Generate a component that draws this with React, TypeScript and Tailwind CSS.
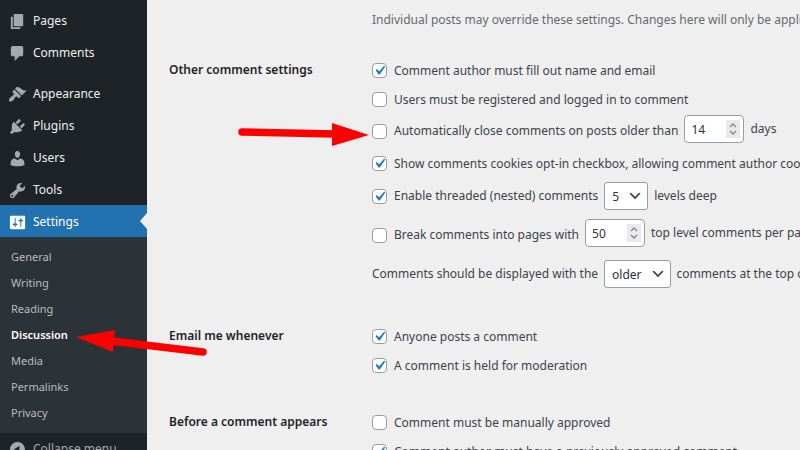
import React from "react";

const menuIcons = {
  pages: "M6 15V2h10v13H6zm-1 1h8v2H3V5h2v11z",
  comments:
    "M5 2h9c1.1 0 2 .9 2 2v7c0 1.1-.9 2-2 2h-2l-5 5v-5H5c-1.1 0-2-.9-2-2V4c0-1.1.9-2 2-2z",
  appearance:
    "M14.48 11.06L7.41 3.99l1.5-1.5c.5-.56 2.3-.47 3.51.32 1.21.8 1.43 1.28 2.91 2.1 1.18.64 2.45 1.26 4.45.85zm-.71.71L6.7 4.7 4.93 6.47c-.39.39-.39 1.02 0 1.41l1.06 1.06c.39.39.39 1.03 0 1.42-.6.6-1.43 1.11-2.21 1.69-.35.26-.7.53-1.01.84C1.43 14.23.4 16.08 1.4 17.07c.99 1 2.84-.03 4.18-1.36.31-.31.58-.66.85-1.02.57-.78 1.08-1.61 1.69-2.21.39-.39 1.02-.39 1.41 0l1.06 1.06c.39.39 1.02.39 1.41 0z",
  plugins:
    "M13.11 4.36L9.87 7.6 8 5.73l3.24-3.24c.35-.34 1.05-.2 1.56.32.52.51.66 1.21.31 1.55zm-8 1.77l.91-1.12 9.01 9.01-1.19.84c-.71.71-2.63 1.16-3.82 1.16H6.14L4.9 17.26c-.59.59-1.54.59-2.12 0-.59-.58-.59-1.53 0-2.12l1.24-1.24v-3.88c0-1.13.4-3.19 1.09-3.89zm7.26 3.97l3.24-3.24c.34-.35 1.04-.21 1.55.31.52.51.66 1.21.31 1.55l-3.24 3.25z",
  users:
    "M10 9.25c-2.27 0-2.73-3.44-2.73-3.44C7 4.02 7.82 2 9.97 2c2.16 0 2.98 2.02 2.71 3.81 0 0-.41 3.44-2.68 3.44zm0 2.57L12.72 10c2.39 0 4.52 2.33 4.52 4.53v2.49s-3.65 1.13-7.24 1.13c-3.65 0-7.24-1.13-7.24-1.13v-2.49c0-2.25 1.94-4.48 4.47-4.48z",
  tools:
    "M16.68 9.77c-1.34 1.34-3.3 1.67-4.95.99l-5.41 6.52c-.99.99-2.59.99-3.58 0s-.99-2.59 0-3.57l6.52-5.42c-.68-1.65-.35-3.61.99-4.95 1.28-1.28 3.12-1.62 4.72-1.06l-2.89 2.89 2.82 2.82 2.86-2.87c.53 1.58.18 3.39-1.08 4.65zM3.81 16.21c.4.39 1.04.39 1.43 0 .4-.4.4-1.04 0-1.43-.39-.4-1.03-.4-1.43 0-.39.39-.39 1.03 0 1.43z",
  settings:
    "M18 16V4c0-.55-.45-1-1-1H3c-.55 0-1 .45-1 1v12c0 .55.45 1 1 1h14c.55 0 1-.45 1-1zM8 11h1c.55 0 1 .45 1 1s-.45 1-1 1H8v1.5c0 .28-.22.5-.5.5s-.5-.22-.5-.5V13H6c-.55 0-1-.45-1-1s.45-1 1-1h1V5.5c0-.28.22-.5.5-.5s.5.22.5.5V11zm5-2h-1c-.55 0-1-.45-1-1s.45-1 1-1h1V5.5c0-.28.22-.5.5-.5s.5.22.5.5V7h1c.55 0 1 .45 1 1s-.45 1-1 1h-1v5.5c0 .28-.22.5-.5.5s-.5-.22-.5-.5V9z",
  collapse:
    "M10 2.16c4.33 0 7.84 3.51 7.84 7.84s-3.51 7.84-7.84 7.84S2.16 14.33 2.16 10 5.71 2.16 10 2.16zm2 11.72V6.12L6.18 9.97z",
};

function MenuIcon({ name }: { name: keyof typeof menuIcons }) {
  return (
    <svg viewBox="0 0 20 20" className="h-[19px] w-[19px] shrink-0" fill="currentColor" aria-hidden="true">
      <path d={menuIcons[name]} />
    </svg>
  );
}

function MenuItem({
  icon,
  label,
  current = false,
}: {
  icon: keyof typeof menuIcons;
  label: string;
  current?: boolean;
}) {
  return (
    <a
      href="#"
      aria-current={current ? "page" : undefined}
      className={
        current
          ? "relative flex h-8 shrink-0 items-center gap-1.5 bg-[#2271b1] pt-0.5 pl-2 text-white"
          : "flex h-8 shrink-0 items-center gap-1.5 pt-0.5 pl-2 text-[#a7aaad]"
      }
    >
      <MenuIcon name={icon} />
      <span className={current ? "text-white" : "text-[#f0f0f1]"}>{label}</span>
      {current && (
        <span className="absolute top-2 right-0 border-y-8 border-r-[7px] border-y-transparent border-r-[#efeff0]" />
      )}
    </a>
  );
}

const subItems = ["General", "Writing", "Reading", "Discussion", "Media", "Permalinks", "Privacy"];

function Sidebar() {
  return (
    <nav className="flex w-[147px] shrink-0 flex-col bg-[#1d2327] pt-1 text-[12px]" aria-label="Main menu">
      <MenuItem icon="pages" label="Pages" />
      <MenuItem icon="comments" label="Comments" />
      <div className="h-[9px] shrink-0" />
      <MenuItem icon="appearance" label="Appearance" />
      <MenuItem icon="plugins" label="Plugins" />
      <MenuItem icon="users" label="Users" />
      <MenuItem icon="tools" label="Tools" />
      <MenuItem icon="settings" label="Settings" current />
      <ul className="shrink-0 bg-[#2c3338] py-[7px] text-[11px]">
        {subItems.map((item) => (
          <li key={item}>
            <a
              href="#"
              className={
                item === "Discussion"
                  ? "flex h-[26px] items-center pl-[11px] font-semibold text-white"
                  : "flex h-[26px] items-center pl-[11px] text-[#b9bcbf]"
              }
            >
              {item}
            </a>
          </li>
        ))}
      </ul>
      <button type="button" className="flex h-8 shrink-0 items-center gap-1.5 pl-2 text-[#a7aaad]">
        <MenuIcon name="collapse" />
        Collapse menu
      </button>
    </nav>
  );
}

function Check({ id, label, checked = false }: { id: string; label: string; checked?: boolean }) {
  return (
    <div className="flex h-[29px] shrink-0 items-center gap-[7px]">
      <span className="grid shrink-0">
        <input
          id={id}
          type="checkbox"
          defaultChecked={checked}
          className="peer col-start-1 row-start-1 h-[15px] w-[15px] appearance-none rounded-[4px] border border-[#999ca0] bg-white"
        />
        <svg
          viewBox="0 0 20 20"
          className="pointer-events-none invisible col-start-1 row-start-1 h-[15px] w-[15px] scale-125 peer-checked:visible"
          fill="#2a7ac0"
          aria-hidden="true"
        >
          <path d="M14.83 4.89l1.34.94-5.81 8.38H9.02L5.78 9.67l1.34-1.25 2.57 2.4z" />
        </svg>
      </span>
      <label htmlFor={id}>{label}</label>
    </div>
  );
}

function NumberField({ label, value }: { label: string; value: number }) {
  return (
    <span className="flex h-7 w-[60px] shrink-0 items-center rounded-[4px] border border-[#999ca0] bg-white pr-[3px] pl-1.5">
      <input
        type="number"
        aria-label={label}
        defaultValue={value}
        className="w-full min-w-0 appearance-none bg-transparent pt-0.5 text-[#2c3338] outline-none [appearance:textfield]"
      />
      <svg viewBox="0 0 14 18" className="h-[18px] w-[14px] shrink-0" aria-hidden="true">
        <rect width="14" height="18" fill="#e9e9ed" />
        <path d="M4 7l3-3 3 3M4 11l3 3 3-3" fill="none" stroke="#85868a" strokeWidth="1.3" />
      </svg>
    </span>
  );
}

function SelectField({ label, options }: { label: string; options: string[] }) {
  return (
    <span className="grid h-7 shrink-0 items-center rounded-[3px] border border-[#999ca0] bg-white text-[#2c3338]">
      <select
        aria-label={label}
        className="col-start-1 row-start-1 h-full appearance-none bg-transparent pt-0.5 pr-7 pl-[7px] outline-none [field-sizing:content]"
      >
        {options.map((o) => (
          <option key={o}>{o}</option>
        ))}
      </select>
      <svg
        viewBox="0 0 20 20"
        className="pointer-events-none col-start-1 row-start-1 mr-1 h-4 w-4 justify-self-end"
        fill="#3c434a"
        aria-hidden="true"
      >
        <path d="M5 6l5 5 5-5 2 1-7 7-7-7 2-1z" />
      </svg>
    </span>
  );
}

function Section({ title, children }: { title: string; children: React.ReactNode }) {
  return (
    <section className="grid grid-cols-[203px_1fr]">
      <h2 className="flex h-7 items-center font-semibold text-[#1d2327]">{title}</h2>
      <div className="flex min-w-0 flex-col">{children}</div>
    </section>
  );
}

function Arrows() {
  return (
    <svg
      width="400"
      height="360"
      viewBox="0 0 400 360"
      className="pointer-events-none absolute top-0 left-0"
      fill="#fe0000"
      stroke="#fe0000"
      aria-hidden="true"
    >
      <path d="M242 132l93 2" strokeWidth="7.5" strokeLinecap="round" />
      <path d="M332 123l37 12-37 11z" stroke="none" />
      <path d="M203 352l-92-11" strokeWidth="7.5" strokeLinecap="round" />
      <path d="M76 337l39-7-2 22z" stroke="none" />
    </svg>
  );
}

export default function App() {
  return (
    <div className="relative flex h-screen overflow-hidden bg-[#efeff0] font-['Noto_Sans','Open_Sans',sans-serif] text-[12px] leading-5 text-[#3c434a]">
      <Sidebar />
      <main className="min-w-0 flex-1 overflow-hidden pl-[22px] whitespace-nowrap">
        <p className="mb-[26px] pt-[10px] pl-[203px] text-[#646970]">
          Individual posts may override these settings. Changes here will only be applied to new posts.
        </p>
        <Section title="Other comment settings">
          <Check id="name-email" label="Comment author must fill out name and email" checked />
          <Check id="registered" label="Users must be registered and logged in to comment" />
          <div className="mt-px mb-1.5 flex h-7 items-center gap-1.5">
            <div className="pt-1">
              <Check id="auto-close" label="Automatically close comments on posts older than" />
            </div>
            <NumberField label="Days before comments close" value={14} />
            <span>days</span>
          </div>
          <Check
            id="cookies"
            label="Show comments cookies opt-in checkbox, allowing comment author cookies to be set"
            checked
          />
          <div className="mt-1 flex h-7 items-center gap-1.5">
            <Check id="threaded" label="Enable threaded (nested) comments" checked />
            <SelectField label="Thread depth" options={["5", "6", "7", "8", "9", "10"]} />
            <span>levels deep</span>
          </div>
          <div className="mt-[9px] flex h-7 items-center gap-1.5">
            <div className="pt-1">
              <Check id="paginate" label="Break comments into pages with" />
            </div>
            <NumberField label="Comments per page" value={50} />
            <span>top level comments per page</span>
          </div>
          <div className="mt-[13px] flex h-7 items-center gap-1.5">
            <span>Comments should be displayed with the</span>
            <SelectField label="Comment order" options={["older", "newer"]} />
            <span>comments at the top of each page</span>
          </div>
        </Section>
        <div className="mt-[34px]">
          <Section title="Email me whenever">
            <Check id="mail-posts" label="Anyone posts a comment" checked />
            <Check id="mail-held" label="A comment is held for moderation" checked />
          </Section>
        </div>
        <div className="mt-7">
          <Section title="Before a comment appears">
            <Check id="manual" label="Comment must be manually approved" />
            <Check id="previous" label="Comment author must have a previously approved comment" checked />
          </Section>
        </div>
      </main>
      <Arrows />
    </div>
  );
}
